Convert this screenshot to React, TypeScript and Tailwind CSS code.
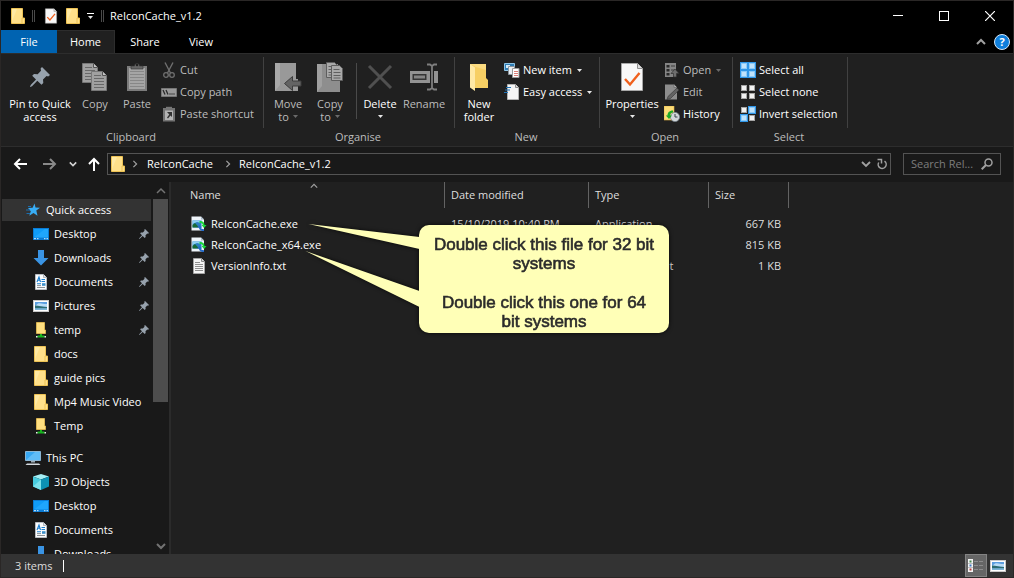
import React from "react";

type IconProps = { className?: string };

const Folder = ({ className = "h-4 w-[14px]" }: IconProps) => (
  <svg viewBox="0 0 14 16" className={className} aria-hidden="true">
    <path d="M.5.5h11v9.500h2v5.500H.5z" fill="#ffe08a" />
    <path d="M1 1h5L1 13z" fill="#ffe9a3" />
    <path d="M.5.5h11v9.500M11 15.500V10h2.500v5.500H.5V.5" fill="none" stroke="#edc254" strokeWidth="1" />
  </svg>
);

const NetFolder = () => (
  <svg viewBox="0 0 14 16" className="h-4 w-[14px]" aria-hidden="true">
    <path d="M2.500.5h8V8h1v3.500h-9z" fill="#ffdf80" stroke="#edc254" strokeWidth=".8" />
    <path d="M6 12h2v2H6zM3.500 13.500h7v2h-7z" fill="#17b51f" />
    <path d="M2 14h1.500v1.500H2zM10.500 14H12v1.500h-1.500z" fill="#e5f3e5" />
  </svg>
);

const Star = () => (
  <svg viewBox="0 0 16 16" className="size-4" aria-hidden="true">
    <path d="M9.500 1.500l1 4 4.500.3-3.700 2.700 1.200 5.300-4-2.800-4.200 2.800 1.500-4.600L3 6.100l4.600-.4z" fill="#38adf5" />
    <path d="M3 4.500h3M1 8h4M1.500 11.500H5" stroke="#1a6fb0" strokeWidth="1" />
  </svg>
);

const Desktop = () => (
  <svg viewBox="0 0 16 16" className="size-4" aria-hidden="true">
    <path d="M0 2h16v12H0z" fill="#0a7bd4" />
    <path d="M1 3h14v8.500H1z" fill="#109cf7" />
    <path d="M1 11.500L12 3h3v8.500z" fill="#2aaeff" opacity=".6" />
    <path d="M1 12.700h2M4 12.700h1.500M11 12.700h1.500M13.500 12.700H15" stroke="#d9efff" strokeWidth="1" />
  </svg>
);

const Download = () => (
  <svg viewBox="0 0 16 16" className="size-4" aria-hidden="true">
    <path d="M5 0h6v8h4.500L8 15.500.5 8H5z" fill="#3a94e4" />
  </svg>
);

const Doc = () => (
  <svg viewBox="0 0 14 16" className="h-4 w-[14px]" aria-hidden="true">
    <path d="M1.500.5h8l3 3v12h-11z" fill="#fbfcfd" stroke="#b9bdc2" />
    <path d="M9.500.5v3h3" fill="#dfe3e8" stroke="#999ea5" strokeWidth=".7" />
    <path d="M3 8l2-5 1.500 5M3.600 6.300h2.500M7.500 5.500H11M7.500 7.500H11M3 9.700h4" stroke="#1c7fd0" strokeWidth="1.100" fill="none" />
    <path d="M3 11.600h4M3 13.500h8" stroke="#8a9198" strokeWidth="1" />
    <path d="M8 9.200h3.500v2.600H8z" fill="#3c8fc9" />
  </svg>
);

const Picture = () => (
  <svg viewBox="0 0 16 16" className="size-4" aria-hidden="true">
    <path d="M0 2h16v12H0z" fill="#c9c9c9" />
    <path d="M1 3h14v10H1z" fill="#fff" />
    <path d="M2 4h12v8H2z" fill="#5b9ee0" />
    <path d="M5 5.500c3-1 6 1 9 .5v3L2 8z" fill="#b9dcf6" />
    <path d="M2 7.500c4 0 7 1.500 12 1.500v1.500H2z" fill="#2d6d72" />
    <path d="M2 10.300h12V12H2z" fill="#7db5d6" />
  </svg>
);

const Computer = () => (
  <svg viewBox="0 0 16 16" className="size-4" aria-hidden="true">
    <path d="M.5 1.500h15v9H.5z" fill="#36a7f3" stroke="#8cb6d4" />
    <path d="M1 10L10 2h5v8z" fill="#7cc9fb" opacity=".6" />
    <path d="M6 11h4v1.500H6z" fill="#9ba9b3" />
    <path d="M2 13.500h12l1.500 1.500H.5z" fill="#d4dadf" />
  </svg>
);

const Cube = () => (
  <svg viewBox="0 0 16 16" className="size-4" aria-hidden="true">
    <path d="M8 0l8 2.500L8 5.500 0 2.500z" fill="#a4eef4" />
    <path d="M0 2.500l8 3V16l-8-3.500z" fill="#48ccdf" />
    <path d="M16 2.500l-8 3V16l8-3.500z" fill="#0c91b4" />
    <path d="M0 12.500L8 5.500V16z" fill="#7be2ec" />
  </svg>
);

const Pin = ({ className = "size-3" }: IconProps) => (
  <svg viewBox="0 0 20 20" className={className} aria-hidden="true">
    <path d="M12 0l8 8-1.800 1.500-1.700-.5-3.500 3.500.3 3.500-1.800 1.800-4.200-4L2 19.200.3 20 0 19.500l.9-1.700L6 12.500 2.200 8.700 4 7l3.700.2L11 3.700l-.4-2.200z" fill="#97a2ad" />
  </svg>
);

const ExeIcon = () => (
  <svg viewBox="0 0 16 16" className="size-4" aria-hidden="true">
    <path d="M.5.5h9.500l3 3V14.500H.5z" fill="#eef4f9" />
    <path d="M10 .5v3h3z" fill="#a9bac8" />
    <path d="M1.500 4.500h9v7h-9z" fill="#2b7fc1" />
    <path d="M1.500 4.500h9V7L6 6 1.500 8z" fill="#8ed0f2" />
    <path d="M1.500 11.500V9L4 7l4 4.500z" fill="#176b36" />
    <path d="M8.500 5c4 0 5 2 5 4h2L13 12l-2.500-3h1.200c0-1.500-1-2-3.200-2z" fill="#18d638" />
    <path d="M13 15c-4 0-5-2-5-3.500H6L8.500 9l2.500 2.500h-1c0 1 1 1.700 3 1.700z" fill="#2369c9" />
  </svg>
);

const TextFile = () => (
  <svg viewBox="0 0 14 16" className="h-4 w-[14px]" aria-hidden="true">
    <path d="M1.500.5h8l3 3v12h-11z" fill="#f5f5f5" stroke="#a5a5a5" />
    <path d="M9.500.5v3h3" fill="#ddd" stroke="#8a8a8a" />
    <path d="M3 4.500h5M3 6.500h8M3 8.500h8M3 10.500h8M3 12.500h8" stroke="#8f8f8f" />
  </svg>
);

const CheckDoc = ({ className = "h-[30px] w-6" }: IconProps) => (
  <svg viewBox="0 0 24 30" className={className} aria-hidden="true">
    <path d="M1.500 1.500h16l5 5v22h-21z" fill="#f8f8f8" stroke="#a8a8a8" />
    <path d="M17.500 1.500v5h5" fill="#ddd" stroke="#8e8e8e" />
    <path d="M5 17l5 5.500 9.500-11.500" fill="none" stroke="#f0601c" strokeWidth="2.400" />
  </svg>
);

const CopyBig = () => (
  <svg viewBox="0 0 26 30" className="h-[30px] w-[26px]" aria-hidden="true">
    {[
      [0, 1],
      [9, 9],
    ].map(([x, y]) => (
      <g key={x} transform={`translate(${x} ${y})`}>
        <path d="M.5.5h11l4 4v15H.5z" fill="#a0a0a0" stroke="#777" />
        <path d="M11.500.5v4h4" fill="#c4c4c4" stroke="#555" />
        <path d="M3 4.500h7M3 7.500h10M3 10.500h10M3 13.500h10M3 16.500h10" stroke="#686868" />
      </g>
    ))}
  </svg>
);

const PasteBig = () => (
  <svg viewBox="0 0 22 30" className="h-[30px] w-[22px]" aria-hidden="true">
    <path d="M1 4h20v25H1z" fill="#7c7c7c" />
    <path d="M3 6h16v21H3z" fill="#a5a5a5" />
    <path d="M4 9.500h14M4 12.500h14M4 15.500h14M4 18.500h14M4 21.500h14M4 24.500h14" stroke="#878787" />
    <path d="M5 7V4h3.500a2.500 2.500 0 015 0H17v3z" fill="#666" stroke="#333" strokeWidth=".6" />
    <circle cx="11" cy="3" r="1.200" fill="#222" />
  </svg>
);

const MoveBig = () => (
  <svg viewBox="0 0 28 30" className="h-[30px] w-7" aria-hidden="true">
    <path d="M1 1h21v16h2v12H1z" fill="#999" />
    <path d="M1 1h5v22L1 29z" fill="#a8a8a8" />
    <path d="M10.500 21.500l8-7v4.500H27v5h-8.500v4.500z" fill="#646464" stroke="#3d3d3d" />
  </svg>
);

const CopyToBig = () => (
  <svg viewBox="0 0 28 32" className="h-8 w-7" aria-hidden="true">
    <path d="M1 3h21v16h2v12H1z" fill="#8e8e8e" />
    <path d="M1 3h5v22l-5 6z" fill="#a0a0a0" />
    {[
      [10, 1],
      [15, 4],
    ].map(([x, y]) => (
      <g key={x} transform={`translate(${x} ${y})`}>
        <path d="M.5.5h8l3 3v12H.5z" fill="#a9a9a9" stroke="#5e5e5e" />
        <path d="M2.500 4.500h6M2.500 7.500h7M2.500 10.500h7M2.500 13h7" stroke="#606060" />
      </g>
    ))}
  </svg>
);

const DeleteBig = () => (
  <svg viewBox="0 0 26 30" className="h-[30px] w-[26px]" aria-hidden="true">
    <path d="M2 4l22 22M24 4L2 26" stroke="#505050" strokeWidth="3" />
  </svg>
);

const RenameBig = () => (
  <svg viewBox="0 0 28 30" className="h-[30px] w-7" aria-hidden="true">
    <path d="M0 9h28v12H0z" fill="#939393" />
    <path d="M2.500 12h14v6h-14z" fill="#353535" />
    <path d="M4 13.500h11v3H4z" fill="#858585" />
    <path d="M22 4v22" fill="none" stroke="#202020" strokeWidth="4" />
    <path d="M17 2.500h3l2 1.500 2-1.500h3M22 4v22M17 27.500h3l2-1.500 2 1.500h3" fill="none" stroke="#7e7e7e" strokeWidth="1.800" />
  </svg>
);

const FolderBig = () => (
  <svg viewBox="0 0 22 30" className="h-[30px] w-[22px]" aria-hidden="true">
    <path d="M2 2h16v14l2 2v8H6z" fill="#f7cf63" />
    <path d="M2 2h16v6L8 5z" fill="#fbdb80" />
    <path d="M2 2l5 3.500V29l-5-3.500z" fill="#ffe9a5" />
  </svg>
);

const Scissors = () => (
  <svg viewBox="0 0 16 16" className="size-4" aria-hidden="true">
    <path d="M4 .5l5.500 10.500M12 .5L6.500 11" stroke="#6f6f6f" strokeWidth="1.400" />
    <circle cx="5" cy="13" r="2.300" fill="none" stroke="#6f6f6f" strokeWidth="1.300" />
    <circle cx="11" cy="13" r="2.300" fill="none" stroke="#6f6f6f" strokeWidth="1.300" />
  </svg>
);

const PathIcon = () => (
  <svg viewBox="0 0 16 16" className="size-4" aria-hidden="true">
    <path d="M.5 4.500h15v8H.5z" fill="#9a9a9a" stroke="#777" />
    <path d="M2 6l2 4.500M5 6l2 4.500M8.500 10h1M10.500 10h1M12.500 10h1" stroke="#2b2b2b" strokeWidth="1.300" />
  </svg>
);

const ShortcutIcon = () => (
  <svg viewBox="0 0 16 16" className="size-4" aria-hidden="true">
    <path d="M2 2h12v13.500H2z" fill="#747474" />
    <path d="M5 .8h6V3H5z" fill="#777" />
    <path d="M4 4.500h8v9.500H4z" fill="#b4b4b4" />
    <path d="M6 6h5v5L9.500 9.500 7 12.500l-1-1 2.300-3z" fill="#333" />
  </svg>
);

const NewItemIcon = () => (
  <svg viewBox="0 0 16 16" className="size-4" aria-hidden="true">
    <path d="M.5 1.500h10v7H.5z" fill="#2f7db4" stroke="#8ec4e6" />
    <path d="M2 3h4v3H2z" fill="#d5ecfa" />
    <path d="M4.500 4.500h6v8h-6z" fill="#e9eef2" stroke="#8d979f" />
    <path d="M8.500 6.500h6.500v9H8.500z" fill="#fff" stroke="#9a9a9a" />
    <path d="M10 9.500h4M10 11.500h4M10 13.500h4" stroke="#dc8079" />
  </svg>
);

const EasyIcon = () => (
  <svg viewBox="0 0 16 16" className="size-4" aria-hidden="true">
    <path d="M3.500.5h8l3 3v12h-11z" fill="#f4f4f4" stroke="#b2b2b2" />
    <path d="M11.500.5v3h3" fill="#ddd" stroke="#8d8d8d" />
    <path d="M2 3.500h5M1 6h5M0 8.500h4" stroke="#2173b5" strokeWidth="1.200" />
  </svg>
);

const OpenIcon = () => (
  <svg viewBox="0 0 16 16" className="size-4" aria-hidden="true">
    <path d="M1 1h11v14H1z" fill="#858585" />
    <path d="M2.500 3h3v2.500h-3zM2.500 7h3v2.500h-3zM2.500 11h3v2.500h-3z" fill="#292929" />
    <path d="M7 4h4M7 8h4" stroke="#3c3c3c" />
    <path d="M11 7l4 4.500h-2.500V15H9.500v-3.500H7z" fill="#6e6e6e" stroke="#303030" strokeWidth=".7" />
  </svg>
);

const EditIcon = () => (
  <svg viewBox="0 0 16 16" className="size-4" aria-hidden="true">
    <path d="M1 .5h9l3 3v12H1z" fill="#8d8d8d" />
    <path d="M10 .5v3h3" fill="#b5b5b5" stroke="#666" strokeWidth=".7" />
    <path d="M3 15.500l1-3L13 4l2 2-8.500 8.500z" fill="#636363" stroke="#333" strokeWidth=".6" />
  </svg>
);

const HistoryIcon = () => (
  <svg viewBox="0 0 16 16" className="size-4" aria-hidden="true">
    <path d="M0 0h10v7h1.500v7H0z" fill="#fbdc78" stroke="#e0b341" strokeWidth=".6" />
    <circle cx="11" cy="11" r="4.600" fill="#d3d7da" stroke="#77838b" strokeWidth=".8" />
    <path d="M11 8v3h2.500" fill="none" stroke="#39434b" strokeWidth="1" />
    <path d="M9 4.500C5 4.500 3.500 7 3.500 9.500H1.800L5 13l3-3.500H6.200c0-2 1-3 3-3z" fill="#1eaa27" />
  </svg>
);

const SelectIcon = ({ mode }: { mode: "all" | "none" | "invert" }) => (
  <svg viewBox="0 0 16 16" className="size-4" aria-hidden="true">
    {mode === "all" && <path d="M0 0h16v16H0z" fill="#2f96e8" />}
    {[
      [0, 0],
      [8, 0],
      [0, 8],
      [8, 8],
    ].map(([x, y], i) => {
      const blue = mode === "all" || (mode === "invert" && (i === 1 || i === 2));
      return (
        <g key={i}>
          {blue && <rect x={x} y={y} width="8" height="8" fill="#2f96e8" />}
          <rect x={x + 1.500} y={y + 1.500} width="5" height="5" fill={blue ? "#bfe2fb" : "#f2f2f2"} stroke={blue ? "#8dcaf7" : "#a6a6a6"} />
        </g>
      );
    })}
  </svg>
);

const Caret = ({ dim = false }: { dim?: boolean }) => (
  <svg viewBox="0 0 5 3" className="h-[3px] w-[5px]" aria-hidden="true">
    <path d="M0 0h5L2.500 3z" fill={dim ? "#6a6a6a" : "#e8e8e8"} />
  </svg>
);

type Direction = "up" | "down" | "right";
const chevrons: Record<Direction, string> = {
  up: "M1 7l4-4 4 4",
  down: "M1 3l4 4 4-4",
  right: "M3 1l4 4-4 4",
};
const Chevron = ({ dir, className = "size-2 text-neutral-400", width = 1.5 }: IconProps & { dir: Direction; width?: number }) => (
  <svg viewBox="0 0 10 10" className={className} aria-hidden="true">
    <path d={chevrons[dir]} fill="none" stroke="currentColor" strokeWidth={width} />
  </svg>
);

type BigProps = {
  icon: React.ReactNode;
  lines: string[];
  className: string;
  caret?: "inline" | "below";
  disabled?: boolean;
};
const BigButton = ({ icon, lines, className, caret, disabled }: BigProps) => (
  <button type="button" className={`flex shrink-0 flex-col items-center ${disabled ? "text-[#bdbdbd]" : "text-white"} ${className}`}>
    <span className="mb-1 flex h-8 items-center justify-center">{icon}</span>
    {lines.map((line, i) => (
      <span key={line} className="flex items-center gap-1 leading-[13px] whitespace-nowrap">
        {line}
        {caret === "inline" && i === lines.length - 1 && <Caret dim />}
      </span>
    ))}
    {caret === "below" && (
      <span className="flex h-3 items-center">
        <Caret />
      </span>
    )}
  </button>
);

type SmallProps = { icon: React.ReactNode; label: string; caret?: boolean; disabled?: boolean };
const SmallButton = ({ icon, label, caret, disabled }: SmallProps) => (
  <button type="button" className={`flex h-[22px] items-center gap-[3px] whitespace-nowrap ${disabled ? "text-[#bdbdbd]" : "text-white"}`}>
    {icon}
    <span>{label}</span>
    {caret && (
      <span className="ml-0.5">
        <Caret dim={disabled} />
      </span>
    )}
  </button>
);

const Group = ({ label, className, children }: { label: string; className: string; children: React.ReactNode }) => (
  <section aria-label={label} className={`flex shrink-0 flex-col pt-[3px] ${className}`}>
    <div className="flex h-[71px] items-start border-r border-[#414141]">{children}</div>
    <div className="flex h-[18px] items-center justify-center pr-[3px] text-[#bdbdbd]">{label}</div>
  </section>
);

const Ribbon = () => (
  <div className="flex h-[94px] shrink-0 overflow-hidden border-y border-[#2d2d2d] bg-[#202020]">
    <Group label="Clipboard" className="w-[263px]">
      <BigButton icon={<Pin className="size-5" />} lines={["Pin to Quick", "access"]} className="ml-0.5 w-[74px] pt-1" />
      <BigButton icon={<CopyBig />} lines={["Copy"]} className="w-9 pt-1" disabled />
      <BigButton icon={<PasteBig />} lines={["Paste"]} className="w-12 pt-1" disabled />
      <div className="pt-0.5">
        <SmallButton icon={<Scissors />} label="Cut" disabled />
        <SmallButton icon={<PathIcon />} label="Copy path" disabled />
        <SmallButton icon={<ShortcutIcon />} label="Paste shortcut" disabled />
      </div>
    </Group>
    <Group label="Organise" className="w-[191px]">
      <BigButton icon={<MoveBig />} lines={["Move", "to"]} caret="inline" className="ml-[3px] w-[42px] pt-1" disabled />
      <BigButton icon={<CopyToBig />} lines={["Copy", "to"]} caret="inline" className="w-[42px] pt-1" disabled />
      <div className="mt-1.5 ml-[5px] h-[56px] w-px bg-[#4a4a4a]" />
      <BigButton icon={<DeleteBig />} lines={["Delete"]} caret="below" className="ml-[3px] w-10 pt-1" />
      <BigButton icon={<RenameBig />} lines={["Rename"]} className="w-12 pt-1" disabled />
    </Group>
    <Group label="New" className="w-[145px]">
      <BigButton icon={<FolderBig />} lines={["New", "folder"]} className="ml-[3px] w-[42px] pt-1" />
      <div className="ml-1 pt-0.5">
        <SmallButton icon={<NewItemIcon />} label="New item" caret />
        <SmallButton icon={<EasyIcon />} label="Easy access" caret />
      </div>
    </Group>
    <Group label="Open" className="w-[133px]">
      <BigButton icon={<CheckDoc />} lines={["Properties"]} caret="below" className="ml-1 w-[56px] pt-1" />
      <div className="ml-1 pt-0.5">
        <SmallButton icon={<OpenIcon />} label="Open" caret disabled />
        <SmallButton icon={<EditIcon />} label="Edit" disabled />
        <SmallButton icon={<HistoryIcon />} label="History" />
      </div>
    </Group>
    <Group label="Select" className="w-[115px]">
      <div className="ml-[7px] pt-0.5">
        <SmallButton icon={<SelectIcon mode="all" />} label="Select all" />
        <SmallButton icon={<SelectIcon mode="none" />} label="Select none" />
        <SmallButton icon={<SelectIcon mode="invert" />} label="Invert selection" />
      </div>
    </Group>
  </div>
);

const Arrow = ({ d, className }: { d: string; className: string }) => (
  <svg viewBox="0 0 14 14" className={`size-[14px] ${className}`} aria-hidden="true">
    <path d={d} fill="none" stroke="currentColor" strokeWidth="2" />
  </svg>
);

const TitleBar = () => (
  <header className="flex h-[29px] shrink-0 items-center bg-black pl-2.5">
    <Folder />
    <span className="ml-[7px] h-3 w-[3px] border-x border-[#4a4a4a]" />
    <button type="button" aria-label="Properties" className="ml-[9px]">
      <CheckDoc className="h-4 w-[14px]" />
    </button>
    <button type="button" aria-label="New folder" className="ml-2">
      <Folder />
    </button>
    <button type="button" aria-label="Customise toolbar" className="ml-[7px] flex w-[7px] flex-col items-center gap-0.5">
      <span className="h-px w-[7px] bg-white" />
      <Caret />
    </button>
    <span className="ml-[7px] h-3 w-[3px] border-x border-[#4a4a4a]" />
    <h1 className="ml-1.5">ReIconCache_v1.2</h1>
    <div className="ml-auto flex h-full">
      <button type="button" aria-label="Minimise" className="flex w-[46px] items-center justify-center">
        <span className="h-px w-2.5 bg-white" />
      </button>
      <button type="button" aria-label="Maximise" className="flex w-[46px] items-center justify-center">
        <span className="size-2.5 border border-white" />
      </button>
      <button type="button" aria-label="Close" className="flex w-[46px] items-center justify-center">
        <svg viewBox="0 0 10 10" className="size-2.5" aria-hidden="true">
          <path d="M0 0l10 10M10 0L0 10" stroke="#fff" strokeWidth="1.200" />
        </svg>
      </button>
    </div>
  </header>
);

const Tabs = () => (
  <nav className="flex h-[23px] shrink-0 bg-black">
    <button type="button" className="w-14 bg-[#0063b1]">File</button>
    <button type="button" className="w-[58px] border-t border-r border-[#2d2d2d] bg-[#202020]">Home</button>
    <button type="button" className="w-[60px]">Share</button>
    <button type="button" className="w-[52px]">View</button>
    <div className="ml-auto flex items-center gap-2 pr-[3px]">
      <button type="button" aria-label="Collapse ribbon">
        <Chevron dir="up" className="size-2.5 text-neutral-400" width={2} />
      </button>
      <button type="button" aria-label="Help" className="flex size-4 items-center justify-center rounded-full border border-[#d5e9fa] bg-[#0f7fdc] font-bold leading-none">
        ?
      </button>
    </div>
  </nav>
);

const AddressRow = () => (
  <div className="flex h-[35px] shrink-0 items-center bg-[#191919] pr-3 pb-px pl-3">
    <button type="button" aria-label="Back"><Arrow d="M14 7H2M7 2L2 7l5 5" className="text-white" /></button>
    <button type="button" aria-label="Forward" className="ml-4"><Arrow d="M0 7h12M7 2l5 5-5 5" className="text-[#8a8a8a]" /></button>
    <button type="button" aria-label="Recent locations" className="ml-3"><Chevron dir="down" width={2} className="size-2 text-neutral-300" /></button>
    <button type="button" aria-label="Up" className="ml-2.5"><Arrow d="M7 14V2M2 7l5-5 5 5" className="text-white" /></button>
    <div className="ml-1.5 flex h-[22px] grow items-center border border-[#535353] pr-0.5 pl-[3px]">
      <Folder />
      <span className="ml-1.5"><Chevron dir="right" /></span>
      <a href="#reiconcache" className="ml-2 w-[69px]">ReIconCache</a>
      <span className="ml-2"><Chevron dir="right" /></span>
      <a href="#v12" className="ml-[7px]">ReIconCache_v1.2</a>
      <button type="button" aria-label="Previous locations" className="ml-auto"><Chevron dir="down" className="size-2.5 text-neutral-400" width={1.8} /></button>
      <button type="button" aria-label="Refresh" className="ml-[5px]">
        <svg viewBox="0 0 12 12" className="size-3" aria-hidden="true">
          <path d="M8.500 3.200A4 4 0 112.700 4.500M1.500 1.500h4v4" fill="none" stroke="#a0a0a0" strokeWidth="1.500" />
        </svg>
      </button>
    </div>
    <label className="ml-3 flex h-[22px] w-[98px] items-center border border-[#535353] pr-[7px] pl-[7px]">
      <input type="text" aria-label="Search" placeholder="Search Rel..." className="w-0 grow bg-transparent outline-none placeholder:text-[#7d7d7d]" />
      <svg viewBox="0 0 12 12" className="size-3 shrink-0" aria-hidden="true">
        <circle cx="7.500" cy="4.500" r="3.500" fill="none" stroke="#a0a0a0" strokeWidth="1.500" />
        <path d="M5 7L.7 11.300" stroke="#a0a0a0" strokeWidth="2" />
      </svg>
    </label>
  </div>
);

type NavItem = { icon: React.ReactNode; label: string; pinned?: boolean };
const quick: NavItem[] = [
  { icon: <Desktop />, label: "Desktop", pinned: true },
  { icon: <Download />, label: "Downloads", pinned: true },
  { icon: <Doc />, label: "Documents", pinned: true },
  { icon: <Picture />, label: "Pictures", pinned: true },
  { icon: <NetFolder />, label: "temp", pinned: true },
  { icon: <Folder />, label: "docs" },
  { icon: <Folder />, label: "guide pics" },
  { icon: <Folder />, label: "Mp4 Music Video" },
  { icon: <NetFolder />, label: "Temp" },
];
const pc: NavItem[] = [
  { icon: <Cube />, label: "3D Objects" },
  { icon: <Desktop />, label: "Desktop" },
  { icon: <Doc />, label: "Documents" },
  { icon: <Download />, label: "Downloads" },
];

const NavRow = ({ icon, label, pinned, root, active }: NavItem & { root?: boolean; active?: boolean }) => (
  <li>
    <a href="#folder" className={`flex items-center pr-0.5 ${root ? "pl-[23px]" : "pl-[31px]"} ${active ? "my-px h-[22px] bg-[#333]" : "h-6"}`}>
      <span className="flex w-4 shrink-0 justify-center">{icon}</span>
      <span className="ml-[5px] whitespace-nowrap">{label}</span>
      {pinned && <span className="ml-auto"><Pin className="size-2.5" /></span>}
    </a>
  </li>
);

const Sidebar = () => (
  <aside className="flex w-[170px] shrink-0 border-r-2 border-[#2b2b2b] bg-[#191919] pl-px">
    <div className="h-full w-[149px] overflow-hidden pt-4">
      <ul>
        <NavRow icon={<Star />} label="Quick access" root active />
        {quick.map((item) => <NavRow key={item.label} {...item} />)}
      </ul>
      <ul className="mt-2">
        <NavRow icon={<Computer />} label="This PC" root />
        {pc.map((item) => <NavRow key={item.label} {...item} />)}
      </ul>
    </div>
    <div className="ml-0.5 flex w-[15px] flex-col items-center">
      <div className="flex h-[17px] items-center"><Chevron dir="up" className="size-2.5 text-neutral-500" /></div>
      <div className="h-[203px] w-full bg-[#4d4d4d]" />
      <div className="mt-auto flex h-4 items-center"><Chevron dir="down" className="size-2.5 text-neutral-500" width={2} /></div>
    </div>
  </aside>
);

const files = [
  { icon: <ExeIcon />, name: "ReIconCache.exe", date: "15/10/2019 10:40 PM", type: "Application", size: "667 KB" },
  { icon: <ExeIcon />, name: "ReIconCache_x64.exe", date: "15/10/2019 10:40 PM", type: "Application", size: "815 KB" },
  { icon: <TextFile />, name: "VersionInfo.txt", date: "15/10/2019 10:40 PM", type: "Text Document", size: "1 KB" },
];

const Callout = () => (
  <div className="absolute top-[43px] left-[134px] flex drop-shadow-[0_0_2px_rgba(0,0,0,0.8)]">
    <svg viewBox="0 0 114 108" className="h-[108px] w-[115px] overflow-visible" aria-hidden="true">
      <path d="M3-1l111 13v12zM0 26l114 40v16z" fill="#ffffb7" />
    </svg>
    <div className="-ml-px flex h-[108px] w-[250px] flex-col justify-between rounded-[10px] bg-[#ffffb7] px-3 pt-2.5 pb-0.5 text-center font-['Liberation_Sans',Arial,sans-serif] text-[17px] leading-[19px] whitespace-nowrap text-[#2b2b2b] [-webkit-text-stroke:0.6px_#2b2b2b]">
      <p>Double click this file for 32 bit<br />systems</p>
      <p>Double click this one for 64<br />bit systems</p>
    </div>
  </div>
);

const FileList = () => (
  <main className="relative min-w-0 grow bg-[#202020]">
    <table className="w-[618px] table-fixed border-separate border-spacing-0 text-left text-[#dedede]">
      <colgroup>
        <col className="w-[274px]" />
        <col className="w-36" />
        <col className="w-[120px]" />
        <col className="w-20" />
      </colgroup>
      <thead>
        <tr className="h-[26px]">
          <th className="relative border-r border-[#636363] pl-[19px] font-normal">
            Name
            <span className="absolute top-0 left-[139px]"><Chevron dir="up" className="size-2 text-neutral-400" /></span>
          </th>
          <th className="border-r border-[#636363] pl-1.5 font-normal">Date modified</th>
          <th className="border-r border-[#636363] pl-1.5 font-normal">Type</th>
          <th className="border-r border-[#636363] pl-1.5 font-normal">Size</th>
        </tr>
      </thead>
      <tbody>
        <tr className="h-[5px]"><td colSpan={4} /></tr>
        {files.map((f) => (
          <tr key={f.name} className="h-[21px]">
            <td className="pl-5 text-white">
              <span className="flex items-center gap-1">
                <span className="flex w-4 justify-center">{f.icon}</span>
                {f.name}
              </span>
            </td>
            <td className="pl-1.5">{f.date}</td>
            <td className="pl-1.5">{f.type}</td>
            <td className="pr-2 text-right">{f.size}</td>
          </tr>
        ))}
      </tbody>
    </table>
    <Callout />
  </main>
);

const StatusBar = () => (
  <footer className="flex h-[23px] shrink-0 items-center bg-[#333] pl-3.5">
    <span className="text-[#dedede]">3 items</span>
    <span className="ml-[11px] h-3 w-px bg-white" />
    <button type="button" aria-label="Details view" className="ml-auto flex h-full w-[22px] items-center justify-center border border-[#838383] bg-[#666]">
      <svg viewBox="0 0 16 14" className="h-3.5 w-4" aria-hidden="true">
        <path d="M0 0h5v13H0z" fill="#f4f4f4" />
        <path d="M1.500 1.500h2v2h-2z" fill="#42874d" />
        <path d="M1.500 5.500h2v2h-2z" fill="#3d78c2" />
        <path d="M1.500 9.500h2v2h-2z" fill="#b73a3a" />
        <path d="M0 4.500h5M0 8.500h5" stroke="#999" strokeWidth=".6" />
        <path d="M6 2.500h4M11 2.500h4M6 6.500h4M11 6.500h4M6 10.500h4M11 10.500h4" stroke="#8c8c8c" />
      </svg>
    </button>
    <button type="button" aria-label="Large icons view" className="mr-[7px] ml-[3px] flex w-4 justify-center"><Picture /></button>
  </footer>
);

export default function App() {
  return (
    <div className="flex h-screen min-h-[400px] flex-col overflow-hidden border border-[#2a2726] bg-[#191919] font-['Open_Sans','Noto_Sans',sans-serif] text-[11px] leading-4 text-white">
      <TitleBar />
      <Tabs />
      <Ribbon />
      <AddressRow />
      <div className="flex min-h-0 grow">
        <Sidebar />
        <FileList />
      </div>
      <StatusBar />
    </div>
  );
}
